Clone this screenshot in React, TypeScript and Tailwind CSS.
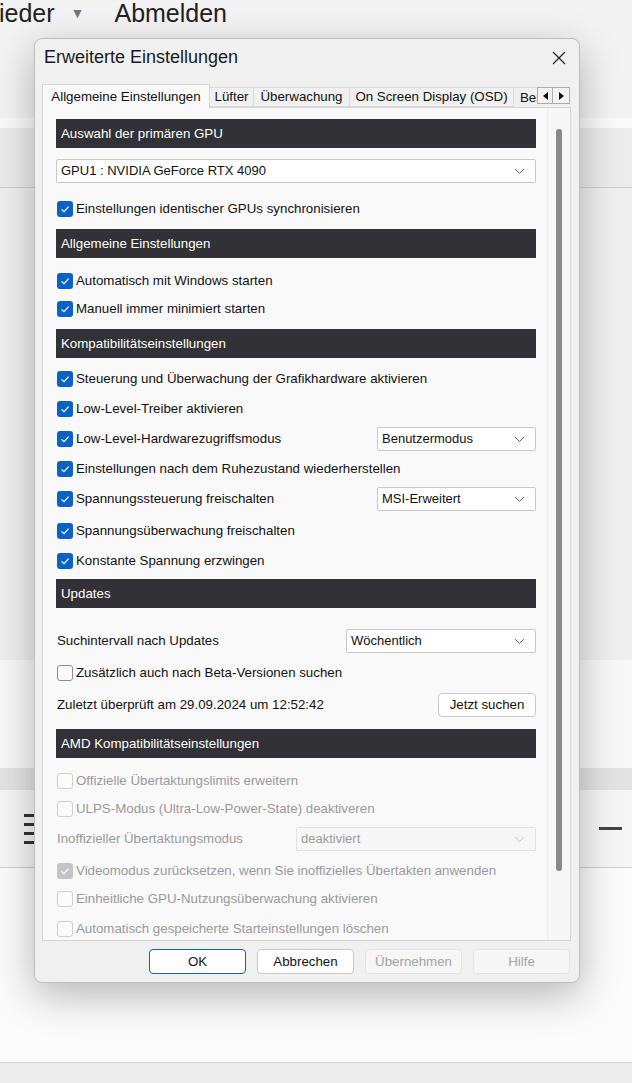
import React from 'react';

const font = { fontFamily: '"Liberation Sans", Arial, sans-serif' };

function Check({ checked, disabled }: { checked?: boolean; disabled?: boolean }) {
  if (checked) {
    return (
      <span
        className={`flex h-4 w-4 shrink-0 items-center justify-center rounded-[3px] ${
          disabled ? 'bg-[#c4c4c4]' : 'bg-[#0a63c2]'
        }`}
      >
        <svg width="12" height="12" viewBox="0 0 12 12">
          <polyline points="2.5,6.3 5,8.6 9.6,3.6" fill="none" stroke="white" strokeWidth="1.1" />
        </svg>
      </span>
    );
  }
  return (
    <span
      className={`h-4 w-4 shrink-0 rounded-[3px] border bg-[#fbfbfb] ${
        disabled ? 'border-[#cfcfcf]' : 'border-[#8c8c8c]'
      }`}
    />
  );
}

function Chevron({ light }: { light?: boolean }) {
  return (
    <svg width="11" height="7" viewBox="0 0 11 7">
      <polyline points="1,1 5.5,5.5 10,1" fill="none" stroke={light ? '#c0c0c0' : '#606060'} strokeWidth="1" />
    </svg>
  );
}

function Select({ value, className, disabled }: { value: string; className: string; disabled?: boolean }) {
  return (
    <div
      className={`flex h-6 items-center justify-between rounded-[2px] border pl-[4px] pr-[10px] text-[13px] ${
        disabled ? 'border-[#e2e2e2] bg-[#f7f7f7] text-[#9b9b9b]' : 'border-[#c8c8c8] bg-white text-[#111]'
      } ${className}`}
    >
      <span>{value}</span>
      <Chevron light={disabled} />
    </div>
  );
}

function Header({ title, mt }: { title: string; mt: string }) {
  return (
    <div className={`flex h-[29px] items-center bg-[#323236] pl-[5px] text-[13.3px] text-white ${mt}`}>{title}</div>
  );
}

function Row({
  label,
  checked,
  disabled,
  mt,
  children,
}: {
  label: string;
  checked?: boolean;
  disabled?: boolean;
  mt: string;
  children?: React.ReactNode;
}) {
  return (
    <div className={`flex h-6 items-center justify-between ${mt}`}>
      <div className="flex items-center gap-[3px] pl-[1px]">
        <Check checked={checked} disabled={disabled} />
        <span className={`text-[13.3px] whitespace-nowrap ${disabled ? 'text-[#9a9a9a]' : 'text-[#111]'}`}>{label}</span>
      </div>
      {children}
    </div>
  );
}

function Button({ label, variant }: { label: string; variant: 'primary' | 'normal' | 'disabled' }) {
  const cls =
    variant === 'primary'
      ? 'border-[#0a63c2] bg-white text-[#111]'
      : variant === 'normal'
      ? 'border-[#c9c9c9] bg-white text-[#111]'
      : 'border-[#e4e4e4] bg-[#f6f6f6] text-[#a3a3a3]';
  return (
    <div className={`flex h-[25px] w-[97px] items-center justify-center rounded-[4px] border text-[13.3px] ${cls}`}>
      {label}
    </div>
  );
}

export default function App() {
  return (
    <div className="relative h-[1083px] w-[632px] overflow-hidden bg-[#f2f2f2]" style={font}>
      {/* page behind the dialog */}
      <div className="flex h-full flex-col">
        <div className="flex h-[118px] items-start bg-[#f3f3f3]">
          <div className="-mt-[5px] flex items-center text-[25px] text-[#222]">
            <span className="-ml-[1px]">ieder</span>
            <span className="ml-[16px] mr-[30px] text-[14px] text-[#777]">▼</span>
            <span>Abmelden</span>
          </div>
        </div>
        <div className="h-[10px] bg-[#fafafa]" />
        <div className="h-[60px] border-b border-[#d2d2d2] bg-[#ececec]" />
        <div className="h-[472px] bg-[#efefef]" />
        <div className="h-[108px] bg-[#f8f8f8]" />
        <div className="h-[22px] bg-[#e3e3e3]" />
        <div className="flex h-[78px] items-center justify-between border-b border-[#cfcfcf] bg-[#f6f6f6] pl-[24px] pr-[10px]">
          <div className="flex flex-col gap-[6px]">
            <span className="h-[3px] w-[12px] bg-[#333]" />
            <span className="h-[3px] w-[12px] bg-[#333]" />
            <span className="h-[3px] w-[12px] bg-[#333]" />
            <span className="h-[3px] w-[12px] bg-[#333]" />
          </div>
          <span className="h-[3px] w-[23px] bg-[#444]" />
        </div>
        <div className="h-[195px] border-b border-[#d6d6d6] bg-[#fbfbfb]" />
        <div className="flex-1 bg-[#ececec]" />
      </div>

      {/* dialog */}
      <div className="absolute left-[34px] top-[38px] flex h-[945px] w-[546px] flex-col rounded-[8px] border border-[#bdbdbd] bg-[#f0f0f0] shadow-[0_12px_40px_rgba(0,0,0,0.28)]">
        <div className="flex h-[37px] items-center justify-between pl-[9px] pr-[13px]">
          <span className="text-[18px] text-[#1a1a1a]">Erweiterte Einstellungen</span>
          <svg width="14" height="14" viewBox="0 0 14 14">
            <path d="M1 1 L13 13 M13 1 L1 13" stroke="#222" strokeWidth="1.2" />
          </svg>
        </div>

        {/* tabs */}
        <div className="ml-[7px] mt-[8px] flex h-[23px] w-[529px] items-end text-[13.3px] text-[#111]">
          <div className="relative z-10 -mb-[1px] flex h-[24px] w-[168px] items-center justify-center border border-b-0 border-[#d6d6d6] bg-[#f9f9f9]">
            Allgemeine Einstellungen
          </div>
          <div className="flex h-[20px] w-[44px] items-center justify-center border border-l-0 border-[#dadada] bg-[#f0f0f0]">
            Lüfter
          </div>
          <div className="flex h-[20px] w-[96px] items-center justify-center border border-l-0 border-[#dadada] bg-[#f0f0f0]">
            Überwachung
          </div>
          <div className="flex h-[20px] w-[164px] items-center justify-center border border-l-0 border-[#dadada] bg-[#f0f0f0]">
            On Screen Display (OSD)
          </div>
          <div className="flex h-[20px] w-[23px] items-center overflow-hidden border-t border-[#dadada] bg-[#f0f0f0] pl-[6px]">
            Benchmark
          </div>
          <div className="mb-[3px] flex h-[17px] w-[16px] items-center justify-center border border-[#adadad] bg-[#f3f3f3]">
            <svg width="5" height="8" viewBox="0 0 5 8">
              <polygon points="5,0 0,4 5,8" fill="#111" />
            </svg>
          </div>
          <div className="mb-[3px] flex h-[17px] w-[17px] items-center justify-center border border-l-0 border-[#adadad] bg-[#f3f3f3]">
            <svg width="5" height="8" viewBox="0 0 5 8">
              <polygon points="0,0 5,4 0,8" fill="#111" />
            </svg>
          </div>
        </div>

        {/* panel */}
        <div className="ml-[7px] flex h-[834px] w-[529px] overflow-hidden border border-[#d6d6d6] bg-[#f9f9f9]">
          <div className="flex-1 overflow-hidden pl-[13px] pr-[11px] pt-[11px]">
            <Header title="Auswahl der primären GPU" mt="mt-0" />
            <Select value="GPU1 : NVIDIA GeForce RTX 4090" className="mt-[11px] w-full" />
            <Row label="Einstellungen identischer GPUs synchronisieren" checked mt="mt-[14px]" />
            <Header title="Allgemeine Einstellungen" mt="mt-[8px]" />
            <Row label="Automatisch mit Windows starten" checked mt="mt-[11px]" />
            <Row label="Manuell immer minimiert starten" checked mt="mt-[4px]" />
            <Header title="Kompatibilitätseinstellungen" mt="mt-[8px]" />
            <Row label="Steuerung und Überwachung der Grafikhardware aktivieren" checked mt="mt-[9px]" />
            <Row label="Low-Level-Treiber aktivieren" checked mt="mt-[6px]" />
            <Row label="Low-Level-Hardwarezugriffsmodus" checked mt="mt-[6px]">
              <Select value="Benutzermodus" className="w-[159px]" />
            </Row>
            <Row label="Einstellungen nach dem Ruhezustand wiederherstellen" checked mt="mt-[6px]" />
            <Row label="Spannungssteuerung freischalten" checked mt="mt-[6px]">
              <Select value="MSI-Erweitert" className="w-[159px]" />
            </Row>
            <Row label="Spannungsüberwachung freischalten" checked mt="mt-[8px]" />
            <Row label="Konstante Spannung erzwingen" checked mt="mt-[6px]" />
            <Header title="Updates" mt="mt-[6px]" />
            <div className="mt-[21px] flex h-6 items-center justify-between">
              <span className="pl-[1px] text-[13.3px] text-[#111]">Suchintervall nach Updates</span>
              <Select value="Wöchentlich" className="w-[190px]" />
            </div>
            <Row label="Zusätzlich auch nach Beta-Versionen suchen" mt="mt-[8px]" />
            <div className="mt-[8px] flex h-6 items-center justify-between">
              <span className="pl-[1px] text-[13.3px] text-[#111]">Zuletzt überprüft am 29.09.2024 um 12:52:42</span>
              <div className="flex h-[24px] w-[98px] items-center justify-center rounded-[4px] border border-[#c9c9c9] bg-white text-[13.3px] text-[#111]">
                Jetzt suchen
              </div>
            </div>
            <Header title="AMD Kompatibilitätseinstellungen" mt="mt-[12px]" />
            <Row label="Offizielle Übertaktungslimits erweitern" disabled mt="mt-[11px]" />
            <Row label="ULPS-Modus (Ultra-Low-Power-State) deaktiveren" disabled mt="mt-[4px]" />
            <div className="mt-[6px] flex h-6 items-center justify-between">
              <span className="pl-[1px] text-[13.3px] text-[#9a9a9a]">Inoffizieller Übertaktungsmodus</span>
              <Select value="deaktiviert" className="w-[240px]" disabled />
            </div>
            <Row label="Videomodus zurücksetzen, wenn Sie inoffizielles Übertakten anwenden" checked disabled mt="mt-[8px]" />
            <Row label="Einheitliche GPU-Nutzungsüberwachung aktivieren" disabled mt="mt-[4px]" />
            <Row label="Automatisch gespeicherte Starteinstellungen löschen" disabled mt="mt-[6px]" />
          </div>
          {/* scrollbar */}
          <div className="flex w-[23px] shrink-0 justify-center border-l border-[#ececec] bg-[#f7f7f7] pt-[21px]">
            <div className="h-[742px] w-[6px] rounded-full bg-[#8a8a8a]" />
          </div>
        </div>

        {/* buttons */}
        <div className="mt-[8px] flex justify-end gap-[11px] pr-[9px]">
          <Button label="OK" variant="primary" />
          <Button label="Abbrechen" variant="normal" />
          <Button label="Übernehmen" variant="disabled" />
          <Button label="Hilfe" variant="disabled" />
        </div>
      </div>
    </div>
  );
}
